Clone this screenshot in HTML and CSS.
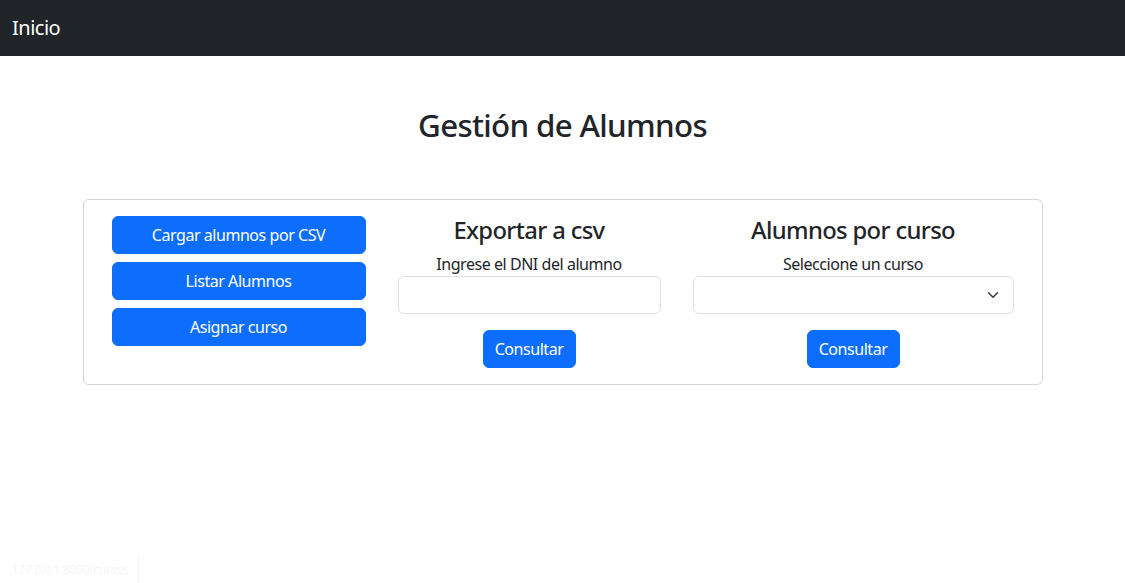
FILE: index.html
```html
<!DOCTYPE html>
<html lang="es">
<head>
<meta charset="utf-8">
<title>Gestión de Alumnos</title>
<link rel="stylesheet" href="styles.css">
</head>
<body>
<nav class="navbar">
  <a class="brand" href="#">Inicio</a>
</nav>
<main class="main">
  <h2 class="title">Gestión de Alumnos</h2>
  <section class="panel">
    <div class="col col-actions">
      <button class="btn btn-block">Cargar alumnos por CSV</button>
      <button class="btn btn-block">Listar Alumnos</button>
      <button class="btn btn-block">Asignar curso</button>
    </div>
    <div class="col col-export">
      <h4 class="col-title">Exportar a csv</h4>
      <label class="label">Ingrese el DNI del alumno</label>
      <input class="field" type="text">
      <button class="btn btn-submit">Consultar</button>
    </div>
    <div class="col col-course">
      <h4 class="col-title">Alumnos por curso</h4>
      <label class="label">Seleccione un curso</label>
      <div class="field select">
        <svg class="chevron" width="12" height="12" viewBox="0 0 16 16"><path d="M2 5l6 6 6-6" fill="none" stroke="#343a40" stroke-width="2" stroke-linecap="round" stroke-linejoin="round"/></svg>
      </div>
      <button class="btn btn-submit">Consultar</button>
    </div>
  </section>
</main>
<div class="status">127.0.0.1:8000/cursos</div>
</body>
</html>
```
FILE: styles.css
```css
* { box-sizing: border-box; }
html, body { margin: 0; padding: 0; }
body {
  font-family: "Noto Sans", "Open Sans", sans-serif;
  font-size: 16px;
  line-height: 1.5;
  color: #212529;
  background: #fff;
  letter-spacing: -0.45px;
}
.navbar {
  height: 56px;
  background: #212529;
  display: flex;
  align-items: center;
  padding: 0 12px;
}
.brand {
  color: #fff;
  text-decoration: none;
  font-size: 20px;
  line-height: 30px;
  letter-spacing: -0.5px;
}
.main {
  display: flex;
  flex-direction: column;
  align-items: center;
}
.title {
  margin: 51px 0 54px;
  font-size: 31.3px;
  line-height: 1.2;
  font-weight: 500;
  letter-spacing: -0.67px;
}
.panel {
  width: 960px;
  border: 1px solid #d3d5d8;
  border-radius: 6px;
  padding: 16px 27px 16px 28px;
  display: flex;
  gap: 32px;
}
.col {
  display: flex;
  flex-direction: column;
  align-items: center;
}
.col-actions { width: 254px; gap: 8px; }
.col-export { width: 263px; }
.col-course { width: 321px; }
.col-title {
  margin: 0 0 8px;
  font-size: 23.8px;
  line-height: 1.2;
  font-weight: 500;
  letter-spacing: -0.65px;
}
.label { display: block; }
.field {
  width: 100%;
  height: 38px;
  border: 1px solid #dee2e6;
  border-radius: 6px;
  background: #fff;
  font: inherit;
  margin: 0 0 16px;
  padding: 6px 12px;
}
.select { position: relative; }
.chevron { position: absolute; right: 14px; top: 12px; }
.btn {
  height: 38px;
  border: 1px solid #0d6efd;
  background: #0d6efd;
  color: #fff;
  border-radius: 6px;
  font: inherit;
  letter-spacing: -0.45px;
  padding: 6px 12px;
  line-height: 24px;
}
.btn-block { width: 100%; }
.btn-submit { width: 93px; padding: 6px 0; }
.status {
  position: fixed;
  left: 0;
  bottom: 0;
  height: 26px;
  padding: 4px 9px 0 12px;
  font-size: 12px;
  letter-spacing: -0.3px;
  color: #f4f4f4;
  border-right: 1px solid #f4f4f4;
}
```
